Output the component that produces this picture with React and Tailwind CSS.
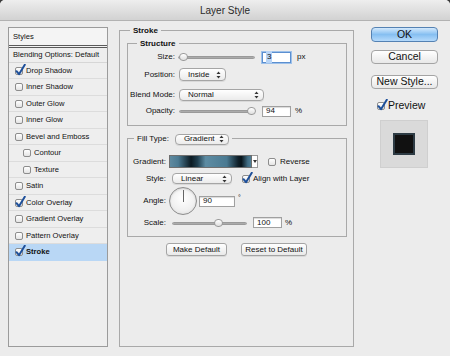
import React from "react";

const F = { fontFamily: '"Liberation Sans", Arial, sans-serif' };

function Check({ checked }) {
  return (
    <span className="relative inline-block w-[8px] h-[8px] shrink-0 rounded-[2px] border border-[#8d8d8d] bg-gradient-to-b from-[#ffffff] to-[#e4e4e4]">
      {checked && (
        <svg className="absolute left-[-1px] top-[-4px]" width="11" height="12" viewBox="0 0 11 12">
          <path d="M1.5 7.2 L4 10.2 L9.8 0.8" fill="none" stroke="#1d4f9a" strokeWidth="2" strokeLinecap="round" strokeLinejoin="round" />
        </svg>
      )}
    </span>
  );
}

function Arrows() {
  return (
    <svg width="5" height="8" viewBox="0 0 5 8" className="shrink-0">
      <path d="M2.5 0.5 L4.5 3 L0.5 3 Z" fill="#333" />
      <path d="M2.5 7.5 L4.5 5 L0.5 5 Z" fill="#333" />
    </svg>
  );
}

function Select({ w, h, label }) {
  return (
    <div
      className="flex items-center justify-between pl-[8px] pr-[4px] rounded-[4px] border border-[#a5a5a5] bg-gradient-to-b from-[#ffffff] to-[#ebebeb] shadow-[0_1px_0_rgba(0,0,0,0.08)] text-[8px] text-[#111]"
      style={{ width: w, height: h }}
    >
      <span>{label}</span>
      <Arrows />
    </div>
  );
}

function Slider({ w, knob }) {
  return (
    <div className="relative h-[10px]" style={{ width: w }}>
      <div className="absolute left-0 right-0 top-[4px] h-[3px] rounded-full bg-gradient-to-b from-[#8e8e8e] to-[#c9c9c9] border border-[#9a9a9a]" />
      <div
        className="absolute top-[1px] w-[9px] h-[8px] rounded-full border border-[#9b9b9b] bg-gradient-to-b from-[#ffffff] to-[#dedede]"
        style={{ left: knob - 4 }}
      />
    </div>
  );
}

function Input({ w, value, focus }) {
  return (
    <div
      className={
        "flex items-center pl-[3px] h-[11px] text-[8px] text-[#111] bg-white " +
        (focus ? "border border-[#5b8fd0] shadow-[0_0_0_1px_#9ec1ea]" : "border border-[#a0a0a0] shadow-[inset_0_1px_1px_rgba(0,0,0,0.15)]")
      }
      style={{ width: w }}
    >
      <span className={focus ? "bg-[#b7d4f6] px-[1px]" : ""}>{value}</span>
    </div>
  );
}

function PushButton({ w, label }) {
  return (
    <div
      className="flex items-center justify-center h-[13px] rounded-[3px] border border-[#a4a4a4] bg-gradient-to-b from-[#ffffff] to-[#e9e9e9] text-[8px] text-[#111] shadow-[0_1px_0_rgba(0,0,0,0.08)]"
      style={{ width: w }}
    >
      {label}
    </div>
  );
}

const styleRows = [
  { label: "Drop Shadow", checked: true, h: 16 },
  { label: "Inner Shadow", h: 17 },
  { label: "Outer Glow", h: 16 },
  { label: "Inner Glow", h: 17 },
  { label: "Bevel and Emboss", h: 16 },
  { label: "Contour", h: 17, indent: true },
  { label: "Texture", h: 16, indent: true },
  { label: "Satin", h: 17 },
  { label: "Color Overlay", checked: true, h: 16 },
  { label: "Gradient Overlay", h: 17 },
  { label: "Pattern Overlay", h: 16 },
  { label: "Stroke", checked: true, h: 17, selected: true },
];

export default function App() {
  return (
    <div className="w-[450px] h-[356px] bg-[#3a3a3a] overflow-hidden" style={F}>
      <div className="w-[450px] h-[356px] rounded-t-[5px] bg-[#ececec] flex flex-col overflow-hidden">
        {/* title bar */}
        <div className="h-[21px] shrink-0 flex items-center justify-center bg-gradient-to-b from-[#eeeeee] to-[#d2d2d2] border-b border-[#b2b2b2] text-[10px] text-[#2a2a2a]">
          Layer Style
        </div>

        <div className="flex flex-1 pt-[6px]">
          {/* left styles list */}
          <div className="ml-[8px] w-[100px] h-[320px] border border-[#9b9b9b] bg-[#eeeeee] flex flex-col text-[7.6px] text-[#111]">
            <div className="h-[17px] flex items-center pl-[4px] bg-[#f4f4f4]">Styles</div>
            <div className="h-[1px] bg-[#5a5a5a]" />
            <div className="h-[1px] bg-[#f4f4f4]" />
            <div className="h-[1px] bg-[#5a5a5a]" />
            <div className="h-[15px] flex items-center pl-[4px] border-b border-[#d6d6d6]">Blending Options: Default</div>
            {styleRows.map((r) => (
              <div
                key={r.label}
                className={
                  "flex items-center gap-[3px] border-b " +
                  (r.selected ? "bg-[#b9d7f5] border-[#b9d7f5]" : "border-[#dcdcdc]") +
                  (r.indent ? " pl-[14px]" : " pl-[6px]")
                }
                style={{ height: r.h }}
              >
                <Check checked={r.checked} />
                <span className={r.selected ? "font-bold" : ""}>{r.label}</span>
              </div>
            ))}
          </div>

          {/* middle stroke group */}
          <div className="relative ml-[11px] mt-[3px] w-[235px] h-[317px] border border-[#a9a9a9] flex flex-col items-start pl-[7px] pt-[12px] text-[8px] text-[#111]">
            <span className="absolute left-[10px] top-[-6px] px-[3px] bg-[#ececec] font-bold text-[8px]">Stroke</span>

            {/* structure */}
            <div className="relative w-[220px] h-[83px] border border-[#a9a9a9] flex flex-col pt-[7px]">
              <span className="absolute left-[9px] top-[-6px] px-[3px] bg-[#ececec] font-bold">Structure</span>
              <div className="flex items-center h-[12px]">
                <span className="w-[47px] text-right">Size:</span>
                <div className="ml-[3px]"><Slider w={77} knob={5} /></div>
                <div className="ml-[7px]"><Input w={29} value="3" focus /></div>
                <span className="ml-[6px]">px</span>
              </div>
              <div className="flex items-center h-[13px] mt-[5px]">
                <span className="w-[47px] text-right">Position:</span>
                <div className="ml-[4px]"><Select w={47} h={13} label="Inside" /></div>
              </div>
              <div className="flex items-center h-[12px] mt-[8px]">
                <span className="w-[47px] text-right">Blend Mode:</span>
                <div className="ml-[4px]"><Select w={85} h={12} label="Normal" /></div>
              </div>
              <div className="flex items-center h-[12px] mt-[4px]">
                <span className="w-[47px] text-right">Opacity:</span>
                <div className="ml-[4px]"><Slider w={76} knob={72} /></div>
                <div className="ml-[7px]"><Input w={29} value="94" /></div>
                <span className="ml-[4px]">%</span>
              </div>
            </div>

            {/* fill type */}
            <div className="relative mt-[12px] w-[220px] h-[99px] border border-[#a9a9a9] flex flex-col pt-[16px]">
              <div className="absolute left-[6px] top-[-6px] flex items-center gap-[6px] px-[3px] bg-[#ececec]">
                <span>Fill Type:</span>
                <Select w={54} h={11} label="Gradient" />
              </div>

              <div className="flex items-center h-[13px]">
                <span className="w-[38px] text-right">Gradient:</span>
                <div className="ml-[3px] w-[83px] h-[13px] border border-[#6f6f6f] bg-[linear-gradient(90deg,#5f8aa0_0%,#4c7b93_10%,#0b1a22_26%,#1f3e4e_34%,#5d8ca3_44%,#4a7a92_70%,#10212b_84%,#08141a_88%,#416d84_96%,#4f7f97_100%)]" />
                <div className="w-[6px] h-[13px] border border-l-0 border-[#9a9a9a] bg-white flex items-center justify-center">
                  <svg width="4" height="3" viewBox="0 0 4 3"><path d="M0 0 L4 0 L2 3 Z" fill="#333" /></svg>
                </div>
                <div className="ml-[10px] flex items-center gap-[4px]">
                  <Check />
                  <span>Reverse</span>
                </div>
              </div>

              <div className="flex items-center h-[11px] mt-[5px]">
                <span className="w-[38px] text-right">Style:</span>
                <div className="ml-[6px]"><Select w={60} h={11} label="Linear" /></div>
                <div className="ml-[10px] flex items-center gap-[3px]">
                  <Check checked />
                  <span>Align with Layer</span>
                </div>
              </div>

              <div className="flex items-center h-[28px] mt-[3px]">
                <span className="w-[38px] text-right">Angle:</span>
                <div className="ml-[3px] w-[28px] h-[28px] rounded-full border border-[#8c8c8c] bg-[radial-gradient(circle_at_50%_40%,#ffffff_0%,#f0f0f0_60%,#d6d6d6_100%)] shadow-[inset_0_1px_2px_rgba(0,0,0,0.15)] relative">
                  <div className="absolute left-[13px] top-[2px] w-[1px] h-[12px] bg-[#666]" />
                </div>
                <div className="ml-[2px]"><Input w={36} value="90" /></div>
                <span className="ml-[3px] self-start mt-[6px] text-[7px]">°</span>
              </div>

              <div className="flex items-center h-[11px] mt-[2px]">
                <span className="w-[38px] text-right">Scale:</span>
                <div className="ml-[6px]"><Slider w={75} knob={46} /></div>
                <div className="ml-[6px]"><Input w={29} value="100" /></div>
                <span className="ml-[3px]">%</span>
              </div>
            </div>

            <div className="flex self-stretch justify-center gap-[14px] mt-[6px] pr-[7px]">
              <PushButton w={61} label="Make Default" />
              <PushButton w={66} label="Reset to Default" />
            </div>
          </div>

          {/* right column */}
          <div className="ml-[17px] w-[67px] flex flex-col items-stretch">
            <div className="h-[15px] rounded-[4px] border border-[#5582b3] bg-gradient-to-b from-[#d3e9fc] via-[#86bff1] to-[#b5dafb] flex items-center justify-center text-[10.5px] text-[#111]">
              OK
            </div>
            <div className="mt-[8px] h-[14px] rounded-[4px] border border-[#a4a4a4] bg-gradient-to-b from-[#ffffff] to-[#e8e8e8] flex items-center justify-center text-[10.5px] text-[#111]">
              Cancel
            </div>
            <div className="mt-[11px] h-[14px] rounded-[4px] border border-[#a4a4a4] bg-gradient-to-b from-[#ffffff] to-[#e8e8e8] flex items-center justify-center text-[10.5px] text-[#111]">
              New Style...
            </div>
            <div className="mt-[9px] ml-[6px] flex items-center gap-[3px] text-[10.5px] text-[#111]">
              <Check checked />
              <span>Preview</span>
            </div>
            <div className="mt-[6px] ml-[9px] w-[48px] h-[48px] bg-[#dadada] border border-[#cfcfcf] flex items-center justify-center">
              <div className="w-[22px] h-[22px] bg-[#111] border-[2px] border-[#2d3b44]" />
            </div>
          </div>
        </div>
      </div>
    </div>
  );
}
